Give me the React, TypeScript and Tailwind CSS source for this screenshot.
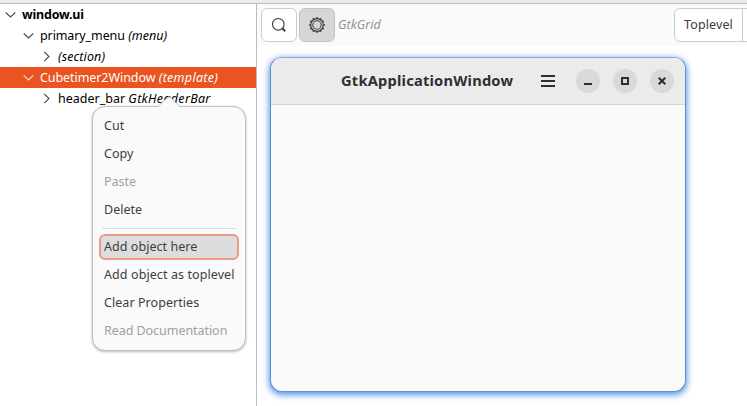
import React from "react";

type RowProps = {
  indent: string;
  open?: boolean;
  selected?: boolean;
  children: React.ReactNode;
};

function Row({ indent, open, selected, children }: RowProps) {
  return (
    <div className={`flex h-[21px] items-center whitespace-nowrap ${indent} ${selected ? "bg-[#e95420] text-white" : "text-black"}`}>
      <svg width="11" height="11" viewBox="0 0 11 11" fill="none" stroke={selected ? "#fbd5c8" : "#4a4a4a"} strokeWidth="1.1" className="mr-[6px] shrink-0">
        {open ? <path d="M.7 3.5 5.5 8l4.800-4.500" /> : <path d="m3.300.8 4.700 4.700-4.700 4.700" />}
      </svg>
      <span className="leading-[21px]">{children}</span>
    </div>
  );
}

type ItemProps = { label: string; spacing: string; disabled?: boolean; active?: boolean };

function Item({ label, spacing, disabled, active }: ItemProps) {
  return (
    <div
      className={`flex h-[26px] w-[140px] items-center whitespace-nowrap rounded-[6px] border-2 pl-[3px] ${spacing} ${
        active ? "border-[#ec9b80] bg-[#dddddd]" : "border-transparent"
      } ${disabled ? "text-[#a0a0a0]" : "text-[#3d3d3d]"}`}
    >
      <span>{label}</span>
    </div>
  );
}

function ContextMenu() {
  return (
    <div className="absolute left-[92px] top-[106px] flex h-[245px] w-[154px] flex-col rounded-[13px] border border-[#bfbfbf] bg-[#fafafa] pl-[6px] pt-[6px] shadow-[0_1px_3px_rgba(0,0,0,0.28)]">
      <svg className="absolute left-[64px] top-[-11px]" width="24" height="12" viewBox="0 0 24 12">
        <path d="M0 12 1.500 10.500 10 2Q12 .2 14 2l8.500 8.500L24 12Z" fill="#fafafa" />
        <path d="M1 10.500 10 2Q12 .2 14 2l9 8.500" fill="none" stroke="#c4c4c4" />
      </svg>
      <div className="flex flex-col gap-[2px]">
        <Item label="Cut" spacing="tracking-[0px]" />
        <Item label="Copy" spacing="tracking-[0px]" />
        <Item label="Paste" spacing="tracking-[0px]" disabled />
        <Item label="Delete" spacing="tracking-[0px]" />
      </div>
      <div className="mb-[5px] ml-[3px] mt-[5px] h-px w-[134px] shrink-0 bg-[#dcdcdc]" />
      <div className="flex flex-col gap-[2px]">
        <Item label="Add object here" spacing="tracking-[0.05px]" active />
        <Item label="Add object as toplevel" spacing="tracking-[0.09px]" />
        <Item label="Clear Properties" spacing="tracking-[0.06px]" />
        <Item label="Read Documentation" spacing="tracking-[-0.05px]" disabled />
      </div>
    </div>
  );
}

function Gear() {
  const teeth = Array.from({ length: 12 }, (_, i) => i * 30);
  return (
    <svg width="16" height="16" viewBox="0 0 16 16" fill="none" stroke="#444">
      <circle cx="8" cy="8" r="6.300" strokeWidth="1.200" />
      <circle cx="8" cy="8" r="4.200" strokeWidth="1.100" />
      {teeth.map((a) => (
        <path key={a} d="M7 1.100h2" strokeWidth="1.600" transform={`rotate(${a} 8 8)`} />
      ))}
    </svg>
  );
}

function PreviewWindow() {
  return (
    <div className="ml-[13px] mt-[11px] h-[335px] w-[416px] overflow-hidden rounded-[12px] border border-[#5f8fcb] border-t-[#90abd0] bg-[#fafafa] shadow-[0_2px_6px_1px_rgba(53,132,228,0.85)]">
      <div className="flex h-[47px] items-center border-b border-[#d6d6d6] bg-[#ebebeb]">
        <span className="-mt-[3px] ml-[70px] w-[200px] whitespace-nowrap font-['Noto_Sans',sans-serif] text-[14.670px] font-bold leading-5 tracking-[0.21px] text-[#303030]">
          GtkApplicationWindow
        </span>
        <svg width="14" height="12" viewBox="0 0 14 12" fill="#2e2e2e" className="mr-[21px]">
          <path d="M0 0h14v2H0zM0 5h14v2H0zM0 10h14v2H0z" />
        </svg>
        <div className="flex gap-[13px]">
          <div className="flex size-6 items-center justify-center rounded-full bg-[#d9d9d9]">
            <svg width="8" height="8" viewBox="0 0 8 8"><path d="M0 6h8v2H0z" fill="#2e2e2e" /></svg>
          </div>
          <div className="flex size-6 items-center justify-center rounded-full bg-[#d9d9d9]">
            <svg width="8" height="8" viewBox="0 0 8 8"><path d="M1 1h6v6H1z" fill="none" stroke="#2e2e2e" strokeWidth="2" /></svg>
          </div>
          <div className="flex size-6 items-center justify-center rounded-full bg-[#d9d9d9]">
            <svg width="8" height="8" viewBox="0 0 8 8"><path d="m.7.7 6.600 6.600M7.300.7.7 7.300" stroke="#2e2e2e" strokeWidth="2" /></svg>
          </div>
        </div>
      </div>
    </div>
  );
}

export default function App() {
  return (
    <div className="relative flex h-[406px] w-[747px] flex-col overflow-hidden bg-white font-['Noto_Sans',sans-serif] text-[12.500px]">
      <div className="h-1 shrink-0 border-b border-[#bdbdbd] bg-[#ebebeb]" />
      <div className="flex min-h-0 flex-1">
        <div className="w-[257px] shrink-0 border-r border-[#bdbdbd]">
          <Row indent="pl-[5px]" open><b className="tracking-[-0.2px]">window.ui</b></Row>
          <Row indent="pl-[23px]" open><span className="tracking-[-0.1px]">primary_menu</span> <i>(menu)</i></Row>
          <Row indent="pl-[41px]"><i className="tracking-[0.1px]">(section)</i></Row>
          <Row indent="pl-[23px]" open selected><span className="tracking-[-0.07px]">Cubetimer2Window</span> <i className="tracking-[0.3px]">(template)</i></Row>
          <Row indent="pl-[41px]">header_bar <i className="tracking-[0.3px]">GtkHeaderBar</i></Row>
        </div>
        <div className="min-w-0 flex-1">
          <div className="flex h-[42px] items-center bg-[#fafafa] pl-1">
            <div className="flex h-[34px] w-9 shrink-0 items-center justify-center rounded-[6px] border border-[#cdcdcd] bg-white">
              <svg width="16" height="16" viewBox="0 0 16 16" fill="none" stroke="#3d3d3d">
                <circle cx="7.300" cy="7.300" r="5.800" strokeWidth="1.100" />
                <path d="m11.300 11.300 3 3" strokeWidth="2" />
              </svg>
            </div>
            <div className="ml-[2px] flex h-[34px] w-9 shrink-0 items-center justify-center rounded-[6px] border border-[#c4c4c4] bg-[#d6d6d6]">
              <Gear />
            </div>
            <i className="ml-[3px] w-[336px] shrink-0 text-[#929595]">GtkGrid</i>
            <div className="flex h-[34px] w-[90px] shrink-0 rounded-l-[6px] border border-[#cdcdcd] bg-white text-[#3d3d3d]">
              <div className="flex w-[68px] items-center border-r border-[#cdcdcd] pl-[9px]"><span className="tracking-[0.12px]">Toplevel</span></div>
            </div>
          </div>
          <PreviewWindow />
        </div>
      </div>
      <ContextMenu />
    </div>
  );
}
